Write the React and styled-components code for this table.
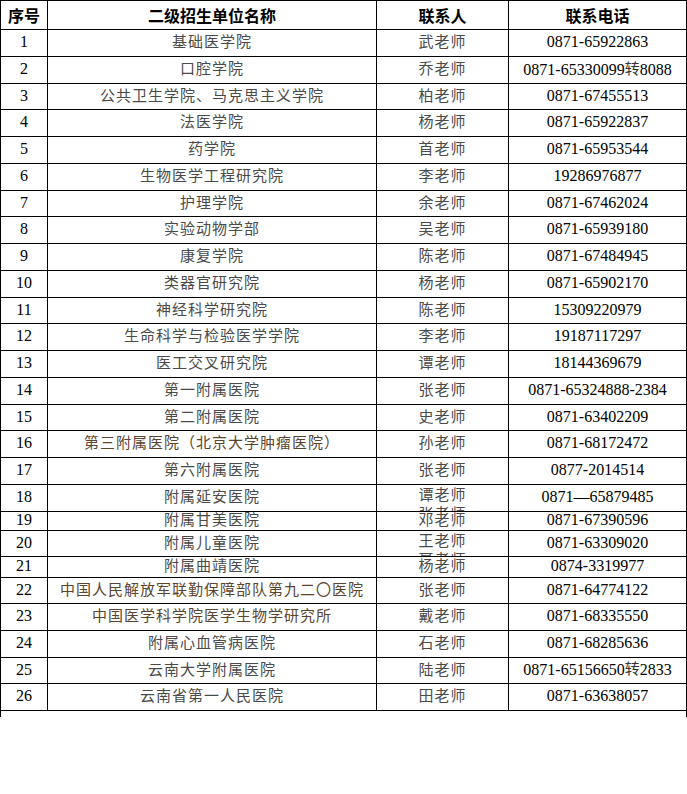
import React from 'react';
import styled, { createGlobalStyle } from 'styled-components';

const GlobalStyle = createGlobalStyle`
  html, body {
    margin: 0;
    padding: 0;
    background: #fff;
  }
`;

const rows = [
  ['基础医学院', ['武老师'], '0871-65922863'],
  ['口腔学院', ['乔老师'], '0871-65330099转8088'],
  ['公共卫生学院、马克思主义学院', ['柏老师'], '0871-67455513'],
  ['法医学院', ['杨老师'], '0871-65922837'],
  ['药学院', ['首老师'], '0871-65953544'],
  ['生物医学工程研究院', ['李老师'], '19286976877'],
  ['护理学院', ['余老师'], '0871-67462024'],
  ['实验动物学部', ['吴老师'], '0871-65939180'],
  ['康复学院', ['陈老师'], '0871-67484945'],
  ['类器官研究院', ['杨老师'], '0871-65902170'],
  ['神经科学研究院', ['陈老师'], '15309220979'],
  ['生命科学与检验医学学院', ['李老师'], '19187117297'],
  ['医工交叉研究院', ['谭老师'], '18144369679'],
  ['第一附属医院', ['张老师'], '0871-65324888-2384'],
  ['第二附属医院', ['史老师'], '0871-63402209'],
  ['第三附属医院（北京大学肿瘤医院）', ['孙老师'], '0871-68172472', true],
  ['第六附属医院', ['张老师'], '0877-2014514'],
  ['附属延安医院', ['谭老师', '张老师'], '0871—65879485'],
  ['附属甘美医院', ['邓老师'], '0871-67390596'],
  ['附属儿童医院', ['王老师', '聂老师'], '0871-63309020'],
  ['附属曲靖医院', ['杨老师'], '0874-3319977'],
  ['中国人民解放军联勤保障部队第九二〇医院', ['张老师'], '0871-64774122', true],
  ['中国医学科学院医学生物学研究所', ['戴老师'], '0871-68335550', true],
  ['附属心血管病医院', ['石老师'], '0871-68285636'],
  ['云南大学附属医院', ['陆老师'], '0871-65156650转2833'],
  ['云南省第一人民医院', ['田老师'], '0871-63638057'],
];

const heights = [
  27, 27, 26, 27, 27, 27, 26, 27, 27, 27, 26, 27, 27, 27, 26, 27, 27,
  27, 19, 26, 21, 26, 27, 27, 26, 27,
];

const Sheet = styled.div`
  width: 687px;
  box-sizing: border-box;
  border-top: 1px solid #000;
  border-left: 1px solid #000;
`;

const Row = styled.div`
  display: grid;
  grid-template-columns: 47px 329px 132px 178px;
  height: ${p => p.$h}px;
`;

const Cell = styled.div`
  box-sizing: border-box;
  display: flex;
  flex-direction: column;
  align-items: center;
  justify-content: ${p => (p.$stack ? 'flex-start' : 'center')};
  overflow: hidden;
  white-space: nowrap;
  border-right: 1px solid #000;
  border-bottom: 1px solid #000;
`;

const HeadText = styled.span`
  font-family: "Noto Sans CJK SC", sans-serif;
  font-weight: 700;
  font-size: 16px;
  line-height: 1;
  color: #000;
`;

const Num = styled.span`
  font-family: "Liberation Serif", serif;
  font-size: 16px;
  line-height: 16px;
  position: relative;
  top: -1px;
  color: #000;
`;

const Han = styled.span`
  font-family: "Noto Sans CJK SC", sans-serif;
  font-size: 15px;
  letter-spacing: 1px;
  line-height: ${p => (p.$stack ? '19px' : '16px')};
  position: relative;
  top: ${p => (p.$stack ? '-1px' : '-2px')};
  color: ${p => (p.$warm ? '#5b4530' : '#4a4a4a')};
`;

const Zhuan = styled.span`
  font-family: "Noto Sans CJK SC", sans-serif;
  font-size: 15px;
  color: #333;
  position: relative;
  top: -1px;
`;

const Tail = styled.div`
  height: 6px;
  border-right: 1px solid #000;
`;

function Phone({ value }) {
  const parts = value.split('转');
  if (parts.length < 2) return <Num>{value}</Num>;
  return (
    <Num>
      {parts[0]}
      <Zhuan>转</Zhuan>
      {parts[1]}
    </Num>
  );
}

export default function App() {
  return (
    <>
      <GlobalStyle />
      <Sheet>
        <Row $h={29}>
          <Cell><HeadText>序号</HeadText></Cell>
          <Cell><HeadText>二级招生单位名称</HeadText></Cell>
          <Cell><HeadText>联系人</HeadText></Cell>
          <Cell><HeadText>联系电话</HeadText></Cell>
        </Row>
        {rows.map(([name, people, phone, warm], i) => {
          const stack = people.length > 1;
          return (
            <Row key={i} $h={heights[i]}>
              <Cell><Num>{i + 1}</Num></Cell>
              <Cell><Han $warm={warm}>{name}</Han></Cell>
              <Cell $stack={stack}>
                {people.map(p => <Han key={p} $stack={stack}>{p}</Han>)}
              </Cell>
              <Cell><Phone value={phone} /></Cell>
            </Row>
          );
        })}
        <Tail />
      </Sheet>
    </>
  );
}
